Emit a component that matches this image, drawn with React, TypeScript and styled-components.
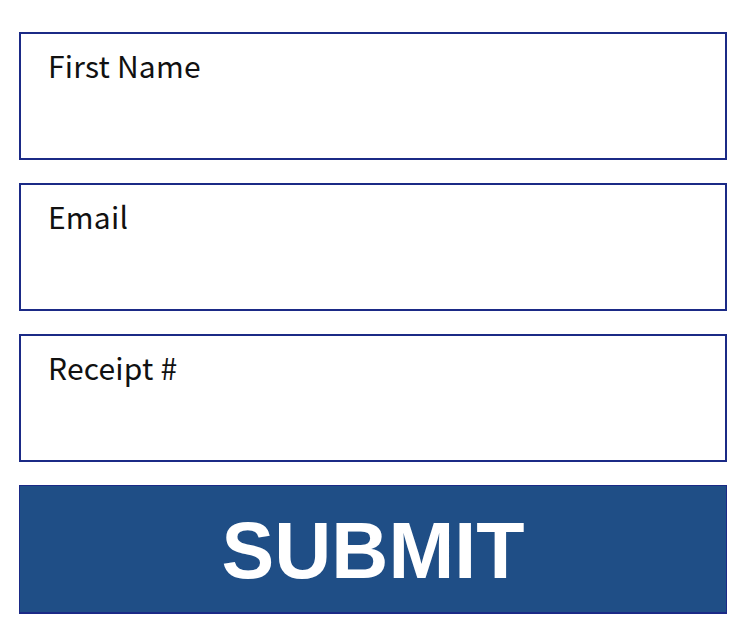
import React from "react";
import styled, { createGlobalStyle } from "styled-components";

const Global = createGlobalStyle`
  html, body { margin: 0; padding: 0; background: #ffffff; }
`;

const Form = styled.form`
  display: flex;
  flex-direction: column;
  gap: 23px;
  padding: 32px 23px 0 19px;
  width: 708px;
`;

const Field = styled.label`
  display: block;
  box-sizing: border-box;
  height: 128px;
  border: 2px solid #1b2a86;
  padding: 11px 0 0 27px;
  font-family: "Noto Sans CJK JP", "Noto Sans", sans-serif;
  font-size: 30px;
  line-height: 40px;
  letter-spacing: 0.2px;
  color: #111111;
`;

const Submit = styled.button`
  box-sizing: border-box;
  height: 129px;
  width: 100%;
  border: 1px solid #1b2a86;
  border-bottom-width: 2px;
  background: #1f4e86;
  color: #ffffff;
  font-family: "Liberation Sans", Arial, sans-serif;
  font-weight: 700;
  font-size: 79px;
  line-height: 1;
  padding: 3px 0 0 0;
  cursor: pointer;
`;

export default function App() {
  return (
    <>
      <Global />
      <Form onSubmit={(e) => e.preventDefault()}>
        <Field>First Name</Field>
        <Field>Email</Field>
        <Field>Receipt #</Field>
        <Submit type="submit">SUBMIT</Submit>
      </Form>
    </>
  );
}
